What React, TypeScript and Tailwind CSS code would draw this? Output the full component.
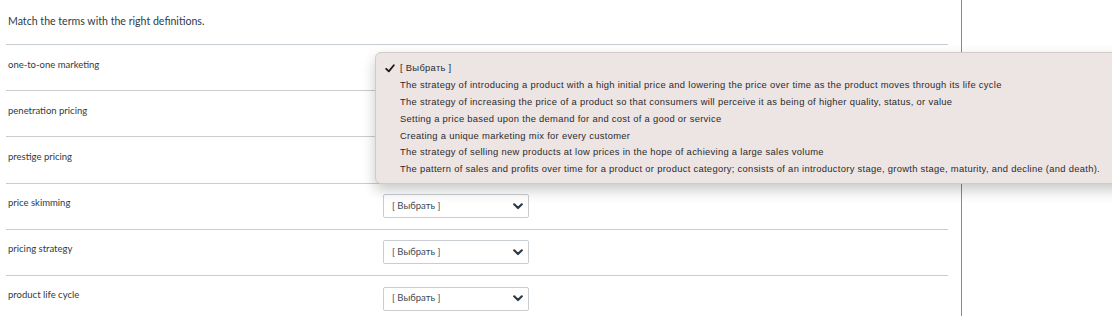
import React from "react";

const terms = [
  "one-to-one marketing",
  "penetration pricing",
  "prestige pricing",
  "price skimming",
  "pricing strategy",
  "product life cycle",
];

const options = [
  "The strategy of introducing a product with a high initial price and lowering the price over time as the product moves through its life cycle",
  "The strategy of increasing the price of a product so that consumers will perceive it as being of higher quality, status, or value",
  "Setting a price based upon the demand for and cost of a good or service",
  "Creating a unique marketing mix for every customer",
  "The strategy of selling new products at low prices in the hope of achieving a large sales volume",
  "The pattern of sales and profits over time for a product or product category; consists of an introductory stage, growth stage, maturity, and decline (and death).",
];

function Chevron() {
  return (
    <svg width="10" height="7" viewBox="0 0 10 7" className="shrink-0">
      <path d="M1.2 1.3 L5 5 L8.8 1.3" fill="none" stroke="#2d3b45" strokeWidth="2.2" strokeLinecap="round" strokeLinejoin="round" />
    </svg>
  );
}

function Check() {
  return (
    <svg width="10" height="9" viewBox="0 0 10 9">
      <path d="M1.2 4.8 L3.8 7.4 L8.8 1.2" fill="none" stroke="#1a1a1a" strokeWidth="1.8" strokeLinecap="round" strokeLinejoin="round" />
    </svg>
  );
}

function SelectBox() {
  return (
    <div className="flex h-[24px] w-[146px] items-center justify-between rounded-[2px] border border-[#c7cdd1] bg-white pl-[8px] pr-[5px]">
      <span className="text-[9.5px] text-[#3d4a54]">[ Выбрать ]</span>
      <Chevron />
    </div>
  );
}

export default function App() {
  return (
    <div className="relative h-[316px] w-[1112px] overflow-hidden bg-white font-['Lato','Noto_Sans',sans-serif]">
      <div className="flex h-full">
        <div className="h-full w-[962px] border-r border-[#8a8a8a] pl-[6px] pr-[13px]">
          <div className="pl-[2px] pt-[12px] pb-[14px] text-[10.6px] leading-[18px] text-[#2d3b45]">
            Match the terms with the right definitions.
          </div>
          {terms.map((t) => (
            <div key={t} className="flex h-[46.2px] items-center border-t border-[#c7cdd1]">
              <div className="w-[377px] self-start pl-[2px] pt-[13.5px] text-[9.5px] leading-[12px] text-[#2d3b45]">{t}</div>
              <SelectBox />
            </div>
          ))}
        </div>
        <div className="flex-1" />
      </div>

      <div className="absolute left-[375px] top-[52px] w-[760px] rounded-[6px] border border-[#d2caca] bg-[#ede4e4] pb-[5px] pt-[7px] shadow-[0_6px_14px_rgba(0,0,0,0.22)] font-['Liberation_Sans',Arial,sans-serif] text-[9.4px] tracking-[0.3px] text-[#2b2b2b]">
        <div className="flex h-[16.8px] items-center">
          <span className="flex w-[24px] pl-[9px]"><Check /></span>
          <span>[ Выбрать ]</span>
        </div>
        {options.map((o) => (
          <div key={o} className="flex h-[16.8px] items-center">
            <span className="w-[24px]" />
            <span className="whitespace-nowrap">{o}</span>
          </div>
        ))}
      </div>
    </div>
  );
}
